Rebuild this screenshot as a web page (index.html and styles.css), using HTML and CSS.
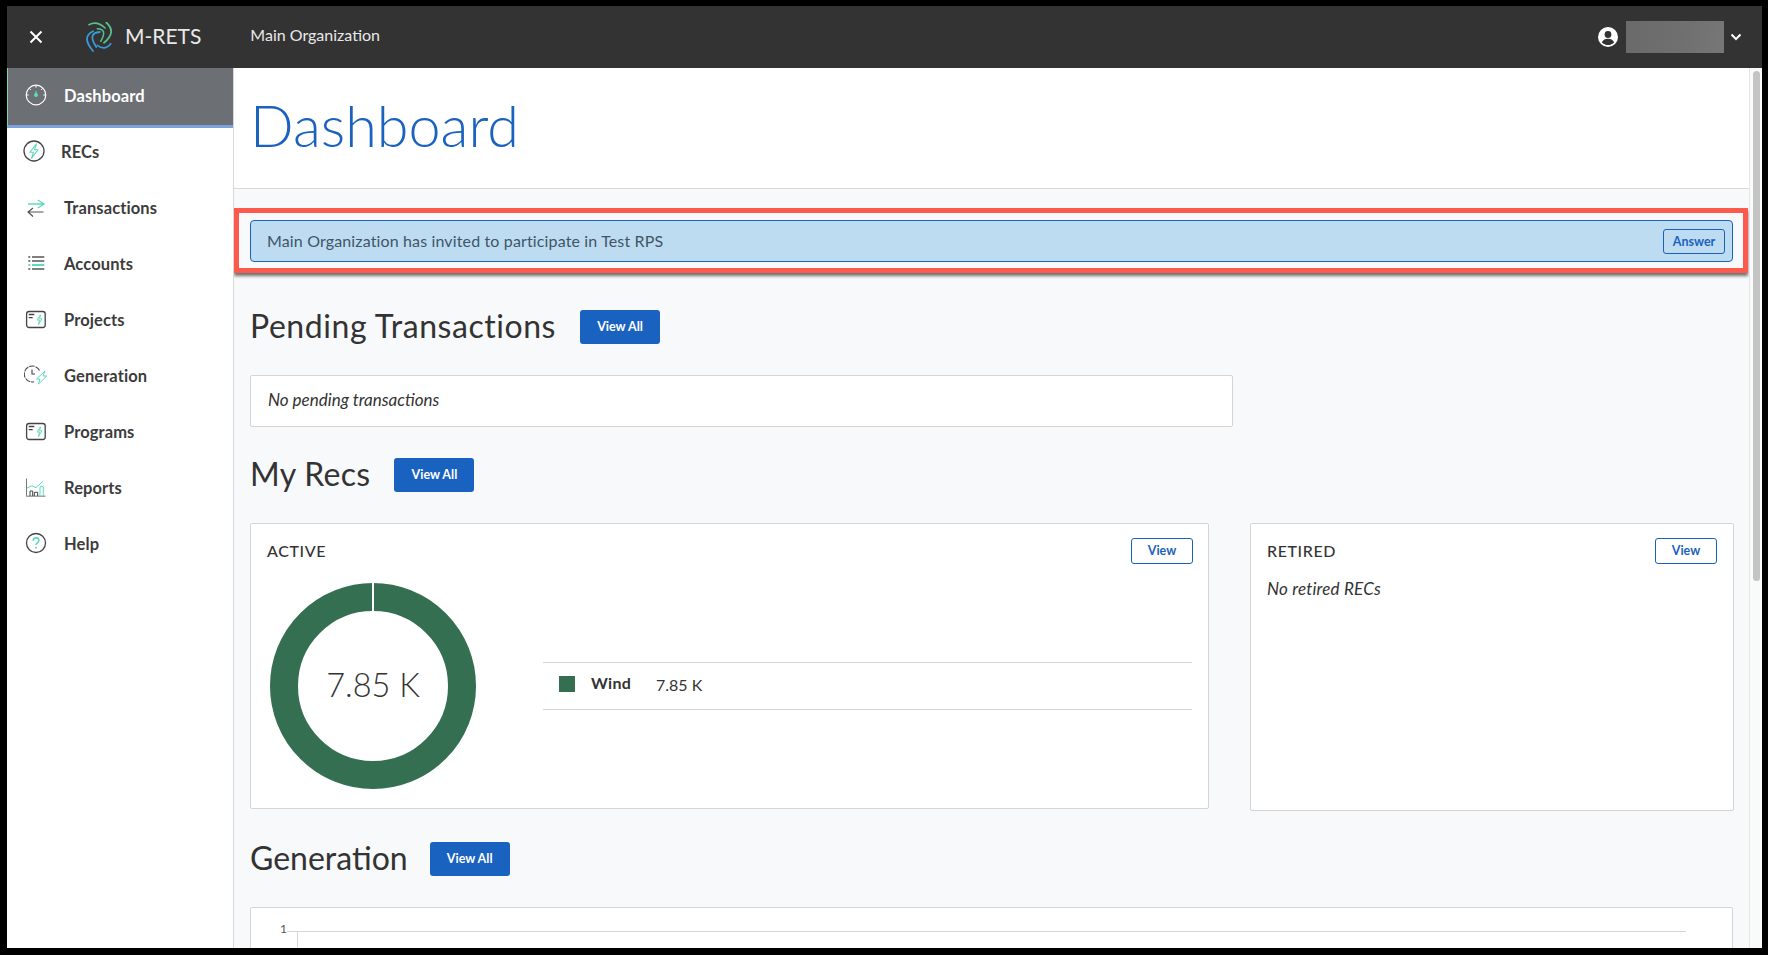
FILE: index.html
```html
<!DOCTYPE html>
<html lang="en">
<head>
    <meta charset="UTF-8">
    <meta name="viewport" content="width=device-width, initial-scale=1.0">
    <title>M-RETS Dashboard</title>
    <link rel="stylesheet" href="styles.css">
</head>
<body>
    <div class="app">
        <header class="topbar">
            <button class="close-btn" aria-label="Close menu">
                <svg width="14" height="14" viewBox="0 0 14 14"><path d="M1.5 1.5l11 11M12.5 1.5l-11 11" stroke="#fff" stroke-width="2" fill="none"/></svg>
            </button>
            <div class="brand">
                <svg class="brand-logo" width="31" height="30" viewBox="0 0 31 30" fill="none" stroke-linecap="round">
                    <path d="M5 2.700Q13 -1.500 21 6" stroke="#58c08a" stroke-width="1.700"/>
                    <path d="M22.300 .5Q33 10 20 20.700" stroke="#58c08a" stroke-width="1.800"/>
                    <path d="M13.300 6.700Q24 7 16.700 19.300" stroke="#58c08a" stroke-width="1.500"/>
                    <path d="M9 9.300Q-3 15 9 29" stroke="#3a9bd8" stroke-width="1.800"/>
                    <path d="M15.700 10Q3 11 12.300 25" stroke="#3a9bd8" stroke-width="1.800"/>
                    <path d="M13.300 23.300Q21 29 26.700 21.700" stroke="#3a9bd8" stroke-width="1.600"/>
                </svg>
                <span class="brand-name">M-RETS</span>
            </div>
            <span class="org-name">Main Organization</span>
            <div class="user-menu">
                <svg width="20" height="20" viewBox="0 0 20 20"><circle cx="10" cy="10" r="10" fill="#fff"/><circle cx="10" cy="7.500" r="3.400" fill="#333"/><path d="M3.800 15.200c1.200-2.400 3.600-3.500 6.200-3.500s5 1.100 6.200 3.500c-1.500 1.800-3.700 2.900-6.200 2.900s-4.700-1.100-6.200-2.900z" fill="#333"/></svg>
                <div class="user-blur"></div>
                <svg class="user-caret" width="12" height="8" viewBox="0 0 12 8"><path d="M1.500 1.500L6 6l4.500-4.500" stroke="#fff" stroke-width="2" fill="none"/></svg>
            </div>
        </header>

        <div class="layout">
            <nav class="sidebar">
                <a class="nav-item active">
                    <svg class="nav-icon" width="24" height="24" viewBox="0 0 24 24" fill="none">
                        <circle cx="12" cy="12" r="9.800" stroke="#fff" stroke-width="1.200"/>
                        <path d="M12 2.500v2.200M5.300 5.300l1.600 1.600M18.700 5.300l-1.600 1.600M2.500 12h2.200M19.300 12h2.200" stroke="#fff" stroke-width="1"/>
                        <path d="M12 8v4" stroke="#5fd9bd" stroke-width="1.200"/>
                        <circle cx="12" cy="12" r="2" fill="#5fd9bd"/>
                    </svg>
                    <span>Dashboard</span>
                </a>
                <a class="nav-item recs">
                    <svg class="nav-icon" width="24" height="24" viewBox="0 0 24 24" fill="none">
                        <circle cx="12" cy="12" r="10" stroke="#444" stroke-width="1.300"/>
                        <path d="M14.500 4.800L8 13.200h3.500L9.500 19.200 16 10.800h-3.500z" stroke="#5fd9bd" stroke-width="1.100" stroke-linejoin="round"/>
                    </svg>
                    <span>RECs</span>
                </a>
                <a class="nav-item">
                    <svg class="nav-icon" width="24" height="24" viewBox="0 0 24 24" fill="none">
                        <path d="M4 9h16M14 5l6 4-6 4" stroke="#5fd9bd" stroke-width="1.300"/>
                        <path d="M19.500 17H4M9 13l-5 4 5 4.500" stroke="#555" stroke-width="1.200"/>
                    </svg>
                    <span>Transactions</span>
                </a>
                <a class="nav-item">
                    <svg class="nav-icon" width="24" height="24" viewBox="0 0 24 24" fill="none">
                        <path d="M8 6h12.300M8 10h12.300M8 18h12.300" stroke="#555" stroke-width="1.300"/>
                        <path d="M8 14h12.300" stroke="#5fd9bd" stroke-width="2.200"/>
                        <path d="M4.300 6h2M4.300 10h2M4.300 18h2" stroke="#555" stroke-width="1.300"/>
                        <path d="M4.300 14h2" stroke="#5fd9bd" stroke-width="2"/>
                    </svg>
                    <span>Accounts</span>
                </a>
                <a class="nav-item">
                    <svg class="nav-icon" width="24" height="24" viewBox="0 0 24 24" fill="none">
                        <rect x="2.600" y="4.500" width="18.600" height="16" rx="2.500" stroke="#444" stroke-width="1.300"/>
                        <path d="M4.700 7.500h5.600M4.700 10.700h4" stroke="#444" stroke-width="1.300"/>
                        <path d="M16.500 7.800L13 13h2.500L14.500 17.500 18 11.800h-2.500z" stroke="#5fd9bd" stroke-width="1"/>
                    </svg>
                    <span>Projects</span>
                </a>
                <a class="nav-item">
                    <svg class="nav-icon" width="24" height="24" viewBox="0 0 24 24" fill="none">
                        <path d="M15.500 7.500A8 8 0 1 0 10 18.800" stroke="#444" stroke-width="1.100" stroke-dasharray="5.500 1"/>
                        <path d="M8 6.500V11h3" stroke="#444" stroke-width="1.100"/>
                        <path d="M21 8l-8.500 8H16l-1.500 5 8.200-8H19z" stroke="#5fd9bd" stroke-width="1" stroke-linejoin="round"/>
                    </svg>
                    <span>Generation</span>
                </a>
                <a class="nav-item">
                    <svg class="nav-icon" width="24" height="24" viewBox="0 0 24 24" fill="none">
                        <rect x="2.600" y="4.500" width="18.600" height="16" rx="2.500" stroke="#444" stroke-width="1.300"/>
                        <path d="M4.700 7.500h5.600M4.700 10.700h4" stroke="#444" stroke-width="1.300"/>
                        <path d="M16.500 7.800L13 13h2.500L14.500 17.500 18 11.800h-2.500z" stroke="#5fd9bd" stroke-width="1"/>
                    </svg>
                    <span>Programs</span>
                </a>
                <a class="nav-item">
                    <svg class="nav-icon" width="24" height="24" viewBox="0 0 24 24" fill="none">
                        <path d="M2.500 3.500V21" stroke="#777" stroke-width="1"/>
                        <path d="M2 21.200h19.500" stroke="#999" stroke-width="1.400"/>
                        <path d="M3 13l5-2.300 4 2 7.300-6.700" stroke="#5fd9bd" stroke-width="1"/>
                        <path d="M6 21v-5h2.700v5M10.300 21v-3.700h3.400V21" stroke="#444" stroke-width="1"/>
                        <path d="M16 21v-9.300h3.300V21" stroke="#5fd9bd" stroke-width="1"/>
                    </svg>
                    <span>Reports</span>
                </a>
                <a class="nav-item">
                    <svg class="nav-icon" width="24" height="24" viewBox="0 0 24 24" fill="none">
                        <circle cx="12" cy="12" r="9.500" stroke="#444" stroke-width="1.300"/>
                        <path d="M9.200 9.800c0-1.800 1.300-2.900 2.900-2.900s2.800 1 2.800 2.600c0 2.400-2.900 2.300-2.900 4.500" stroke="#5fd9bd" stroke-width="1.600"/>
                        <circle cx="12" cy="16.800" r="1" fill="#5fd9bd"/>
                    </svg>
                    <span>Help</span>
                </a>
            </nav>

            <main class="main">
                <div class="page-head">
                    <h1>Dashboard</h1>
                </div>

                <div class="highlight">
                    <div class="alert">
                        <span class="alert-text">Main Organization has invited to participate in Test RPS</span>
                        <button class="btn-outline btn-answer">Answer</button>
                    </div>
                </div>

                <div class="content">
                    <div class="section-head pending-head">
                        <h2>Pending Transactions</h2>
                        <button class="btn-primary">View All</button>
                    </div>
                    <div class="card pending-card"><span>No pending transactions</span></div>

                    <div class="section-head recs-head">
                        <h2>My Recs</h2>
                        <button class="btn-primary">View All</button>
                    </div>
                    <div class="recs-grid">
                        <div class="card rec-card active-card">
                            <div class="rec-head">
                                <h3>Active</h3>
                                <button class="btn-outline">View</button>
                            </div>
                            <div class="rec-body">
                                <div class="donut">
                                    <svg width="206" height="206" viewBox="0 0 206 206">
                                        <circle cx="103" cy="103" r="89" fill="none" stroke="#346f51" stroke-width="28"/>
                                        <path d="M103 0v29" stroke="#fff" stroke-width="2"/>
                                    </svg>
                                    <span class="donut-label">7.85 K</span>
                                </div>
                                <div class="legend">
                                    <span class="swatch"></span>
                                    <span class="legend-name">Wind</span>
                                    <span class="legend-value">7.85 K</span>
                                </div>
                            </div>
                        </div>
                        <div class="card rec-card retired-card">
                            <div class="rec-head">
                                <h3>Retired</h3>
                                <button class="btn-outline">View</button>
                            </div>
                            <p class="empty">No retired RECs</p>
                        </div>
                    </div>

                    <div class="section-head generation-head">
                        <h2>Generation</h2>
                        <button class="btn-primary">View All</button>
                    </div>
                    <div class="card chart-card">
                        <div class="chart">
                            <span class="chart-label">1</span>
                            <span class="chart-tick"></span>
                            <div class="chart-plot"></div>
                        </div>
                    </div>
                </div>
            </main>

            <div class="scroll-track">
                <div class="scroll-thumb"></div>
            </div>
        </div>
    </div>
</body>
</html>
```

FILE: styles.css
```css
* {
    box-sizing: border-box;
}
html, body {
    height: 100%;
    margin: 0;
}
body {
    font-family: "Lato", "Noto Sans", sans-serif;
    background: #000;
    color: #333;
    overflow: hidden;
}
button {
    font-family: inherit;
    cursor: pointer;
}
.app {
    position: fixed;
    top: 6px;
    left: 7px;
    right: 6px;
    bottom: 7px;
    display: flex;
    flex-direction: column;
    background: #fff;
}

/* top bar */
.topbar {
    height: 62px;
    flex: none;
    display: flex;
    align-items: center;
    background: #333;
    color: #fff;
}
.close-btn {
    width: 14px;
    height: 14px;
    margin-left: 22px;
    padding: 0;
    display: flex;
    background: none;
    border: none;
}
.brand {
    display: flex;
    align-items: center;
    margin-left: 41px;
}
.brand-name {
    margin-left: 10px;
    margin-bottom: 4px;
    font-size: 21px;
    color: #e9e9e9;
}
.org-name {
    margin-left: 49px;
    margin-bottom: 6px;
    font-size: 16px;
    color: #e9e9e9;
}
.user-menu {
    margin-left: auto;
    display: flex;
    align-items: center;
}
.user-blur {
    width: 98px;
    height: 32px;
    margin-left: 8px;
    background: linear-gradient(100deg, #6a6a6a, #707070 60%, #777);
}
.user-caret {
    margin-left: 6px;
    margin-right: 20px;
}

.layout {
    flex: 1;
    min-height: 0;
    display: flex;
}

/* sidebar */
.sidebar {
    width: 227px;
    flex: none;
    background: #fff;
    border-right: 1px solid #d8d8d8;
}
.nav-item {
    height: 56px;
    display: flex;
    align-items: center;
    padding-left: 17px;
    font-size: 16.5px;
    font-weight: 700;
    letter-spacing: 0.1px;
    color: #3c3c3c;
}
.nav-item span {
    margin-left: 16px;
    margin-top: 2px;
}
.nav-item.active {
    height: 60px;
    margin-bottom: -5px;
    padding-bottom: 3px;
    padding-left: 16px;
    background: #6c6f73;
    border-left: 1px solid #7fd6bd;
    border-bottom: 3px solid #7ba2db;
    color: #fff;
}
.nav-item.recs .nav-icon {
    margin-left: -2px;
}
.nav-item.recs span {
    margin-left: 15px;
}

/* main column */
.main {
    flex: 1;
    min-width: 0;
    background: #f8f9fb;
    overflow: hidden;
}
.scroll-track {
    width: 13px;
    flex: none;
    padding: 3px 0 0 3px;
    background: #fafafa;
    border-left: 1px solid #e6e6e6;
}
.scroll-thumb {
    width: 7px;
    height: 510px;
    background: #c4c4c4;
    border-radius: 4px;
}
.page-head {
    height: 121px;
    padding-left: 16px;
    display: flex;
    align-items: center;
    background: #fff;
    border-bottom: 1px solid #d8d8d8;
}
h1 {
    margin: 0 0 7px;
    font-size: 57.5px;
    font-weight: 300;
    color: #1a62c0;
}
.highlight {
    margin: 19px 1px 0 0;
    padding: 7px 10px 6px 11px;
    border: 5px solid #fb5a4c;
    box-shadow: 0 3px 3px rgba(0, 0, 0, 0.55);
}
.alert {
    height: 42px;
    padding: 0 7px 0 16px;
    display: flex;
    align-items: center;
    justify-content: space-between;
    background: #bddcf1;
    border: 1px solid #1a62c0;
    border-radius: 4px;
    font-size: 16px;
    letter-spacing: 0.14px;
    color: #3f5566;
}
.alert-text {
    margin-bottom: 2px;
}
.content {
    padding: 37px 16px 0;
}
.section-head {
    height: 34px;
    display: flex;
    align-items: center;
    gap: 24px;
    margin-bottom: 31px;
}
.generation-head {
    gap: 22px;
}
h2 {
    margin: 0 0 4px;
    font-size: 32px;
    font-weight: 400;
    color: #333;
}
.pending-head h2 {
    letter-spacing: 0.55px;
}
.recs-head h2 {
    letter-spacing: 0.3px;
}
.btn-primary {
    height: 34px;
    width: 80px;
    padding: 0 0 2px;
    background: #1a62c0;
    border: none;
    border-radius: 3px;
    color: #fff;
    font-size: 12.5px;
    font-weight: 700;
}
.btn-outline {
    height: 26px;
    width: 62px;
    padding: 0 0 2px;
    background: #fff;
    border: 1px solid #1a62c0;
    border-radius: 3px;
    color: #1a62c0;
    font-size: 12.5px;
    font-weight: 700;
}
.btn-answer {
    background: transparent;
    height: 25px;
    padding: 0;
}
.card {
    background: #fff;
    border: 1px solid #d5d5d5;
    border-radius: 2px;
}
.pending-card {
    width: 983px;
    height: 52px;
    margin-bottom: 31px;
    padding-left: 17px;
    display: flex;
    align-items: center;
    font-size: 17px;
    font-style: italic;
}
.pending-card span {
    margin-bottom: 3px;
}

/* recs */
.recs-grid {
    display: grid;
    grid-template-columns: 959px 484px;
    gap: 41px;
    margin-bottom: 31px;
}
.rec-card {
    padding: 14px 15px 0 16px;
}
.active-card {
    height: 286px;
}
.retired-card {
    height: 288px;
    padding-right: 16px;
}
.rec-head {
    display: flex;
    align-items: center;
    justify-content: space-between;
}
h3 {
    margin: 0 0 1px;
    font-size: 16px;
    font-weight: 500;
    text-transform: uppercase;
    letter-spacing: 0.6px;
}
.rec-body {
    margin-top: 19px;
    display: flex;
    align-items: center;
}
.donut {
    position: relative;
    width: 206px;
    height: 206px;
    margin-left: 3px;
    flex: none;
}
.donut svg {
    display: block;
}
.donut-label {
    position: absolute;
    inset: 0 0 4px;
    display: flex;
    align-items: center;
    justify-content: center;
    font-size: 32.500px;
    font-weight: 300;
}
.legend {
    flex: 1;
    height: 48px;
    margin-left: 67px;
    margin-right: 1px;
    padding-left: 16px;
    display: flex;
    align-items: center;
    border-top: 1px solid #d5d5d5;
    border-bottom: 1px solid #d5d5d5;
}
.swatch {
    width: 16px;
    height: 16px;
    margin-bottom: 5px;
    background: #346f51;
}
.legend-name {
    margin-left: 16px;
    margin-bottom: 8px;
    width: 65px;
    font-size: 16px;
    font-weight: 700;
    letter-spacing: 0.3px;
}
.legend-value {
    margin-bottom: 4px;
    font-size: 16px;
}
.empty {
    margin: 14px 0 0;
    font-size: 17px;
    letter-spacing: 0.2px;
    font-style: italic;
}

/* generation chart */
.chart-card {
    height: 300px;
    padding: 17px 46px 0 29px;
}
.chart {
    display: flex;
    align-items: flex-start;
}
.chart-label {
    width: 7px;
    margin-top: -3px;
    font-size: 12px;
    line-height: 14px;
    color: #555;
}
.chart-tick {
    width: 10px;
    height: 1px;
    margin-top: 6px;
    background: #d5d5d5;
}
.chart-plot {
    flex: 1;
    height: 200px;
    margin-top: 6px;
    border-top: 1px solid #d5d5d5;
    border-left: 1px solid #d5d5d5;
}
```
